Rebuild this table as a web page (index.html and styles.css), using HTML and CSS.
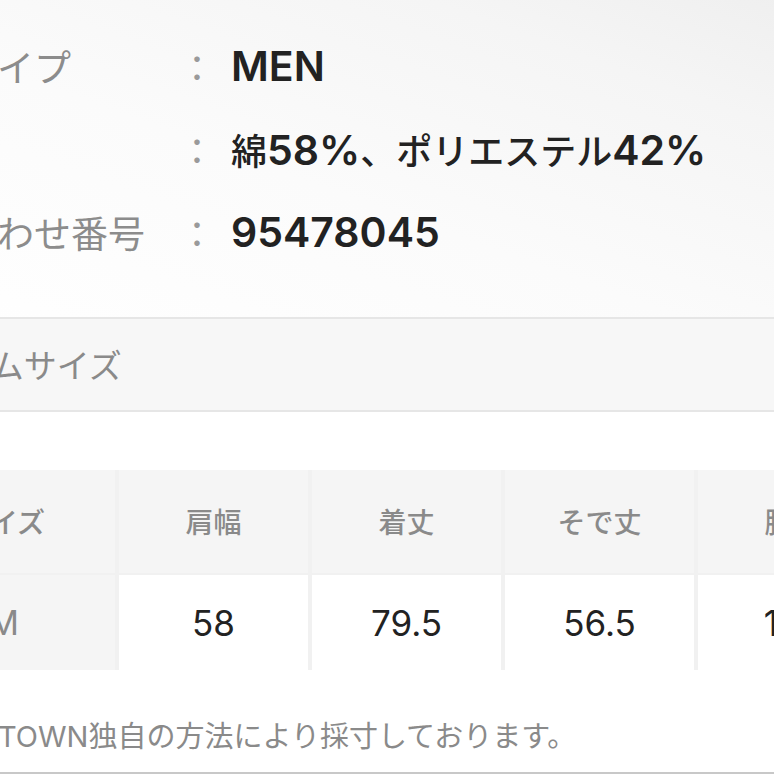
FILE: index.html
```html
<!DOCTYPE html>
<html lang="ja">
<head>
<meta charset="utf-8">
<title>アイテムサイズ</title>
<link rel="stylesheet" href="styles.css">
</head>
<body>
<div class="page">
  <section class="spec">
    <div class="spec-row">
      <span class="label">性別・タイプ</span>
      <span class="colon">：</span>
      <span class="value">MEN</span>
    </div>
    <div class="spec-row">
      <span class="label">素材</span>
      <span class="colon">：</span>
      <span class="value"><span class="ja">綿</span>58%<span class="ja">、ポリエステル</span>42%</span>
    </div>
    <div class="spec-row">
      <span class="label">お問い合わせ番号</span>
      <span class="colon">：</span>
      <span class="value">95478045</span>
    </div>
  </section>

  <h2 class="heading">アイテムサイズ</h2>

  <div class="size-table">
    <div class="cell head">サイズ</div>
    <div class="cell head">肩幅</div>
    <div class="cell head">着丈</div>
    <div class="cell head">そで丈</div>
    <div class="cell head">胸囲</div>
    <div class="cell size">M</div>
    <div class="cell num">58</div>
    <div class="cell num">79.5</div>
    <div class="cell num">56.5</div>
    <div class="cell num">126</div>
  </div>

  <p class="note">ZOZOTOWN独自の方法により採寸しております。</p>
</div>
</body>
</html>
```

FILE: styles.css
```css
html, body {
  margin: 0;
  padding: 0;
  background: #ffffff;
  overflow: hidden;
}

body {
  font-family: Inter, "Noto Sans CJK JP", sans-serif;
}

.page {
  margin-left: -151px;
  width: 1200px;
}

.spec {
  padding: 24px 0 44px;
  background: linear-gradient(200deg, #ebebeb 0%, #f5f5f5 30%, #fbfbfb 60%, #ffffff 100%);
}

.spec-row {
  display: grid;
  grid-template-columns: 330px 52px auto;
  align-items: center;
  height: 83px;
}

.label {
  font-family: "Noto Sans CJK JP", sans-serif;
  font-size: 37px;
  color: #8c8c8c;
  white-space: nowrap;
}

.colon {
  font-family: "Noto Sans CJK JP", sans-serif;
  font-size: 36px;
  color: #9a9a9a;
}

.value {
  font-family: Inter, "Noto Sans CJK JP", sans-serif;
  font-size: 41px;
  font-weight: 600;
  color: #222222;
  white-space: nowrap;
}

.value .ja {
  font-family: "Noto Sans CJK JP", sans-serif;
  font-size: 36px;
  font-weight: 500;
}

.heading {
  margin: 0;
  height: 91px;
  line-height: 91px;
  padding-left: 46px;
  background: #f7f7f7;
  border-top: 2px solid #e6e6e6;
  border-bottom: 2px solid #e6e6e6;
  font-family: "Noto Sans CJK JP", sans-serif;
  font-size: 33px;
  font-weight: 400;
  color: #8a8a8a;
}

.size-table {
  margin: 58px 0 0 43px;
  display: grid;
  grid-template-columns: 223px repeat(4, 189px);
  grid-template-rows: 103px 95px;
  gap: 2px 4px;
  background: #f1f1f1;
  width: max-content;
}

.cell {
  display: flex;
  align-items: center;
  justify-content: center;
  white-space: nowrap;
}

.head {
  background: #f5f5f5;
  font-family: "Noto Sans CJK JP", sans-serif;
  font-size: 28px;
  font-weight: 500;
  color: #8a8a8a;
  padding-bottom: 2px;
}

.size {
  background: #f5f5f5;
  font-family: Inter, sans-serif;
  font-size: 34px;
  color: #8a8a8a;
}

.num {
  background: #ffffff;
  font-family: Inter, sans-serif;
  font-size: 35px;
  color: #222222;
}

.note {
  margin: 0;
  box-sizing: border-box;
  height: 104px;
  padding: 50px 0 0 71px;
  line-height: 34px;
  font-family: Inter, "Noto Sans CJK JP", sans-serif;
  font-size: 29px;
  color: #8a8a8a;
  border-bottom: 2px solid #c8c8c8;
}
```
